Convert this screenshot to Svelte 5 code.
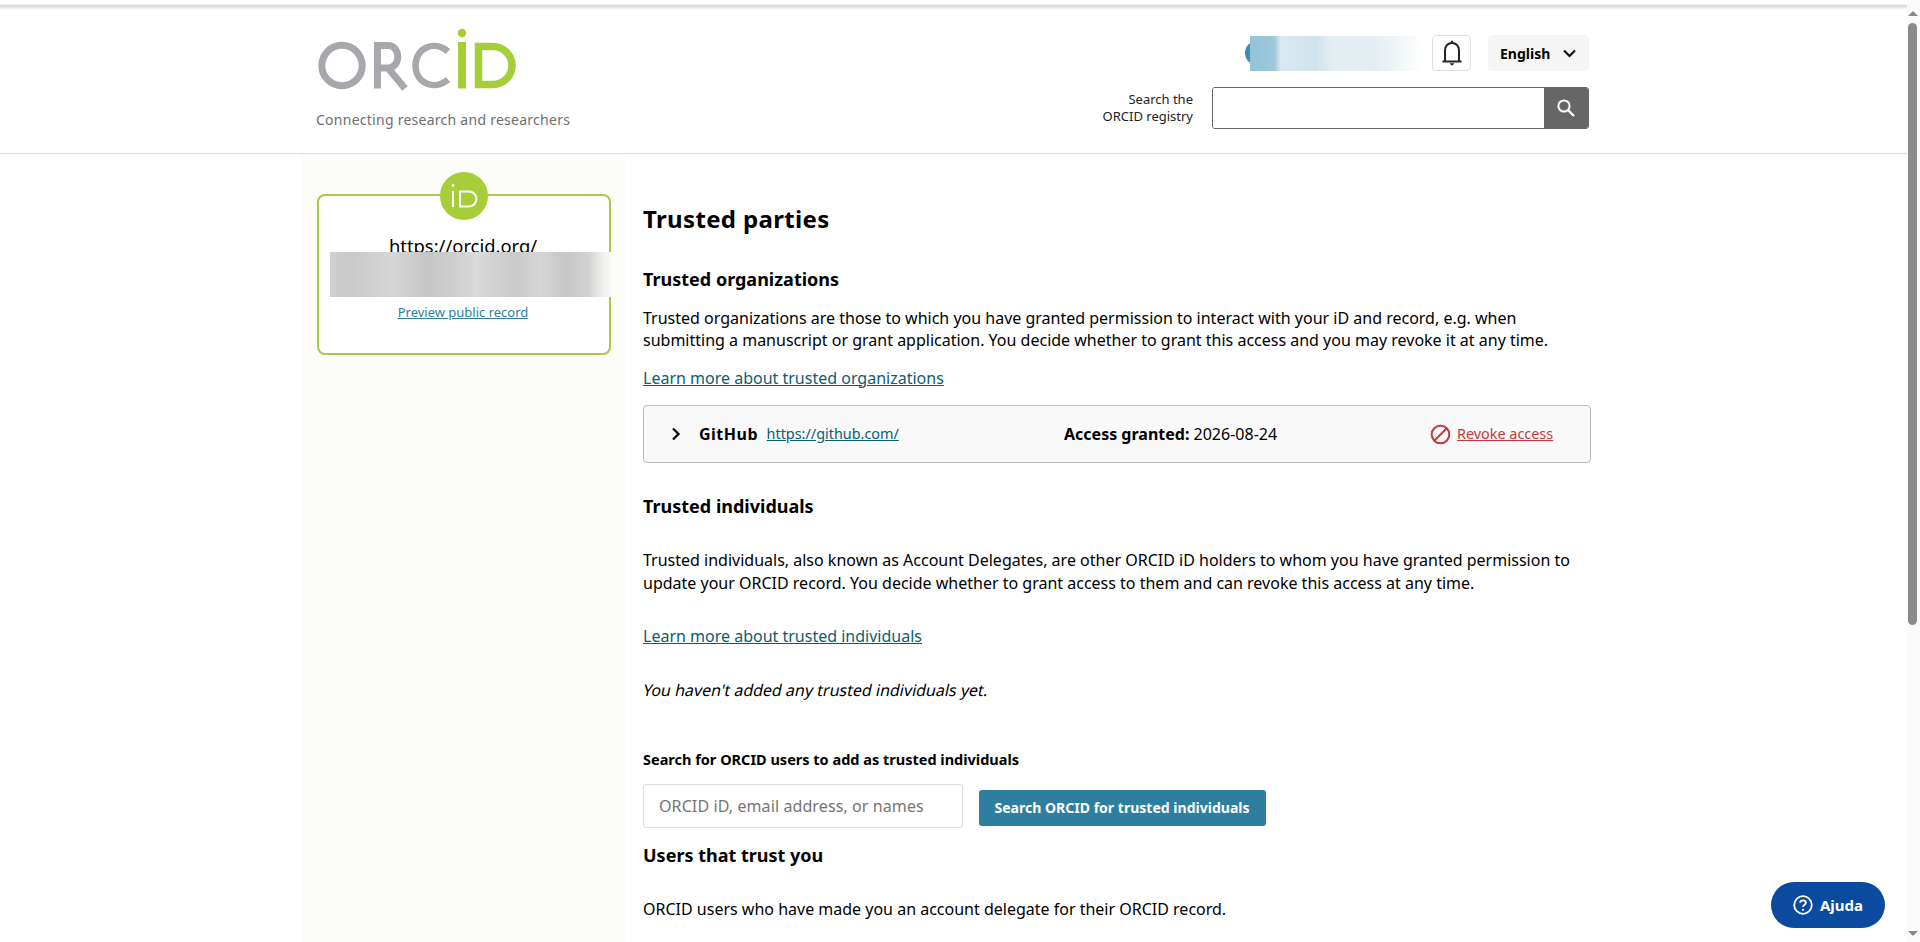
<script>
  const intro = "Trusted organizations are those to which you have granted permission to interact with your iD and record, e.g. when submitting a manuscript or grant application. You decide whether to grant this access and you may revoke it at any time.";
  const indiv = "Trusted individuals, also known as Account Delegates, are other ORCID iD holders to whom you have granted permission to update your ORCID record. You decide whether to grant access to them and can revoke this access at any time.";
</script>

<div class="page">
  <div class="viewport">
    <div class="topline"></div>
    <header>
      <div class="hwrap">
        <div class="brand">
          <svg class="logo" width="204" height="70" viewBox="0 0 204 70" role="img" aria-label="ORCID logo">
            <g fill="none" stroke="#a6a8ab" stroke-width="7">
              <circle cx="26" cy="41.5" r="20.2" />
              <path d="M61.5 64.5V21.5H72C85 21.5 85 44 72 44H61.5M72 44L89 64.5" />
              <path d="M132 27.5C118 15.5 99.5 24 99.5 41.5C99.5 59 118 67.5 132 55.5" stroke-width="6.5" />
            </g>
            <g fill="#a6ce39">
              <rect x="142" y="18" width="8" height="46.5" />
              <circle cx="146" cy="9" r="4.2" />
            </g>
            <path d="M162.5 60.5V22.5H177A19 19 0 0 1 177 60.5Z" fill="none" stroke="#a6ce39" stroke-width="7.5" />
          </svg>
          <div class="tagline">Connecting research and researchers</div>
        </div>
        <div class="tools">
          <div class="row1">
            <div class="user"><span class="dot"></span><span class="smear"></span></div>
            <button class="bell" aria-label="Notifications">
              <svg width="22" height="26" viewBox="0 0 22 26" fill="none" stroke="#222" stroke-width="2">
                <path d="M4 21.5V10.5C4 6 7 3 11 3S18 6 18 10.5V21.5" />
                <path d="M1.5 21.5H20.5" />
                <path d="M11 .8V3.5" />
                <path d="M8.4 23.2H13.6L11 25.8Z" fill="#222" stroke="none" />
              </svg>
            </button>
            <button class="lang">
              <span>English</span>
              <svg width="13" height="9" viewBox="0 0 13 9" fill="none" stroke="#111" stroke-width="2.2"><path d="M1 1.5L6.5 7L12 1.5" /></svg>
            </button>
          </div>
          <div class="row2">
            <div class="slabel">Search the<br />ORCID registry</div>
            <div class="search">
              <input aria-label="Search the ORCID registry" />
              <button aria-label="Search">
                <svg width="20" height="20" viewBox="0 0 20 20" fill="none" stroke="#fff" stroke-width="2"><circle cx="8" cy="8" r="5.6" /><path d="M12 12L18 18" stroke-width="2.4" /></svg>
              </button>
            </div>
          </div>
        </div>
      </div>
    </header>

    <div class="body">
      <aside>
        <div class="card">
          <div class="badge">
            <svg width="32" height="24" viewBox="0 0 32 24" fill="none" stroke="#fff" stroke-width="2">
              <path d="M5 7V23" />
              <circle cx="5" cy="1.5" r="1.4" fill="#fff" stroke="none" />
              <path d="M12 22.5V7.5H21A7.5 7.5 0 0 1 21 22.5Z" />
            </svg>
          </div>
          <div class="url">https://orcid.org/</div>
          <div class="blurred"></div>
          <a class="preview" href="#preview">Preview public record</a>
        </div>
      </aside>

      <main>
        <h1>Trusted parties</h1>
        <h2 class="h-org">Trusted organizations</h2>
        <p class="p-org">{intro}</p>
        <a class="more more-org" href="#org">Learn more about trusted organizations</a>

        <div class="party">
          <svg class="chev" width="10" height="14" viewBox="0 0 10 14" fill="none" stroke="#111" stroke-width="2.4"><path d="M2 1.5L7.5 7L2 12.5" /></svg>
          <strong class="pname">GitHub</strong>
          <a class="plink" href="#gh">https://github.com/</a>
          <span class="granted"><b>Access granted:</b> 2026-08-24</span>
          <span class="revoke">
            <svg width="21" height="21" viewBox="0 0 21 21" fill="none" stroke="#c8363c" stroke-width="2"><circle cx="10.5" cy="10.5" r="8.8" /><path d="M4.5 16.5L16.5 4.5" /></svg>
            <a href="#revoke">Revoke access</a>
          </span>
        </div>

        <h2 class="h-ind">Trusted individuals</h2>
        <p class="p-ind">{indiv}</p>
        <a class="more more-ind" href="#ind">Learn more about trusted individuals</a>
        <p class="none"><span class="slant">You haven't added any trusted individuals yet.</span></p>
        <div class="flabel">Search for ORCID users to add as trusted individuals</div>
        <div class="searchrow">
          <input class="uinput" placeholder="ORCID iD, email address, or names" />
          <button class="primary">Search ORCID for trusted individuals</button>
        </div>
        <h2 class="h-trust">Users that trust you</h2>
        <p class="p-trust">ORCID users who have made you an account delegate for their ORCID record.</p>
      </main>
    </div>
  </div>

  <div class="scrollbar">
    <span class="up"></span>
    <span class="thumb"></span>
    <span class="grow"></span>
    <span class="down"></span>
  </div>

  <button class="help">
    <svg width="20" height="20" viewBox="0 0 20 20" fill="none" stroke="#fff" stroke-width="1.8">
      <circle cx="10" cy="10" r="8.8" />
      <path d="M7.2 7.8C7.2 4.6 12.9 4.6 12.9 7.8C12.9 9.8 10 9.8 10 12" />
      <circle cx="10" cy="14.8" r="1.1" fill="#fff" stroke="none" />
    </svg>
    Ajuda
  </button>
</div>

<style>
  :global(html), :global(body) { margin: 0; height: 100%; overflow: hidden; background: #fff; }
  * { box-sizing: border-box; }
  .page {
    position: relative; display: flex; height: 942px; overflow: hidden;
    font-family: "Noto Sans", sans-serif; font-size: 16px; line-height: 22.4px; color: #000;
  }
  .viewport { flex: 1; min-width: 0; }
  .topline { height: 10px; background: linear-gradient(#fff 0, #fff 4px, #dcdcdc 5px, #e2e2e2 7px, #f8f8f8 9px, #fff 10px); }

  header { height: 144px; border-bottom: 1px solid #dcdcdc; }
  .hwrap { width: 1273px; margin-left: 316px; display: flex; justify-content: space-between; }
  .brand { padding-top: 14px; }
  .logo { display: block; }
  .tagline { margin-top: 16px; font-size: 14px; line-height: 20px; color: #6f6f6f; letter-spacing: .26px; }
  .tools { padding-top: 25px; display: flex; flex-direction: column; align-items: flex-end; }
  .row1 { display: flex; align-items: center; height: 36px; }
  .user { position: relative; width: 172px; height: 35px; margin-right: 10px; }
  .dot { position: absolute; left: -5px; top: 5px; width: 24px; height: 24px; border-radius: 50%; background: #3c8db0; }
  .smear { position: absolute; inset: 0; background: linear-gradient(90deg, #92c3d6 0, #9cc8da 14%, #d9e9ef 18%, #cfe3ec 38%, #e4eff3 48%, #e4eef2 72%, #eef4f6 84%, #fff 100%); }
  .bell { width: 39px; height: 36px; padding: 0; border: 1px solid #ddd; border-radius: 4px; background: #fff; display: flex; align-items: center; justify-content: center; margin-right: 17px; }
  .lang { width: 101px; height: 36px; border: 0; border-radius: 4px; background: #f5f5f5; font: 700 14px "Noto Sans", sans-serif; color: #000; display: flex; align-items: center; gap: 13px; padding: 0 0 0 12px; }
  .lang svg { flex: none; }
  .row2 { display: flex; align-items: center; margin-top: 16px; }
  .slabel { width: 180px; margin-right: 19px; text-align: right; font-size: 13px; line-height: 17px; color: #222; }
  .search { display: flex; width: 377px; height: 42px; border: 1px solid #666; border-radius: 3px; overflow: hidden; }
  .search input { flex: 1; min-width: 0; border: 0; outline: 0; }
  .search button { width: 44px; border: 0; padding: 0; background: #666; display: flex; align-items: center; justify-content: center; }

  .body { display: flex; margin-left: 301px; }
  aside { width: 324px; height: 788px; background: #fcfdf8; padding: 40px 14px 0 16px; }
  .card { position: relative; height: 161px; border: 2px solid #a9c84a; border-radius: 8px; background: #fff; text-align: center; }
  .badge { position: absolute; left: 121px; top: -24px; width: 48px; height: 48px; border-radius: 50%; background: #a6ce39; display: flex; align-items: center; justify-content: center; }
  .url { position: absolute; left: 0; right: 2px; top: 38px; font-size: 18.4px; line-height: 24px; }
  .blurred { position: absolute; left: 11px; top: 56px; width: 281px; height: 45px; background: linear-gradient(90deg, #cfcfcf 0, #c9c9c9 8%, #d6d6d6 22%, #c6c6c6 34%, #cdcdcd 44%, #dadada 52%, #c9c9c9 66%, #d5d5d5 75%, #c6c6c6 84%, #d2d2d2 92%, #f3f5f1 98%, #f7f8f5 100%); }
  .preview { position: absolute; left: 0; right: 2px; top: 108px; font-size: 13px; line-height: 17px; color: #2e7f9f; }

  main { width: 966px; padding-left: 18px; }
  h1, h2, p { margin: 0; }
  h1 { font-size: 24px; line-height: 30px; margin-top: 50px; letter-spacing: .35px; }
  h2 { font-size: 18px; line-height: 24px; }
  a { color: #0a5d72; }
  .h-org { margin-top: 33px; }
  .p-org { margin-top: 16px; }
  .more { display: block; }
  .more-org { margin-top: 15px; }
  .party { display: flex; align-items: center; width: 948px; height: 58px; margin-top: 16px; border: 1px solid #bbb; border-radius: 4px; background: #f9f9f9; padding-left: 27px; }
  .pname { margin-left: 18px; letter-spacing: .5px; }
  .plink { margin-left: 8.5px; font-size: 14.4px; }
  .granted { position: absolute; left: 1064px; }
  .revoke { position: absolute; left: 1430px; display: flex; align-items: center; gap: 6px; font-size: 14.4px; }
  .revoke a { color: #c8363c; }
  .h-ind { margin-top: 31px; }
  .p-ind { margin-top: 31px; }
  .more-ind { margin-top: 31px; }
  .none { margin-top: 32px; }
  .slant { display: inline-block; margin-left: -2px; transform: skewX(-12deg); transform-origin: 0 100%; }
  .flabel { margin-top: 47px; font-size: 14.5px; font-weight: 700; line-height: 20px; }
  .searchrow { display: flex; align-items: center; margin-top: 15px; }
  .uinput { width: 320px; height: 44px; border: 1px solid #ddd; border-radius: 3px; padding: 0 15px; font: 16px "Noto Sans", sans-serif; letter-spacing: .1px; outline: 0; }
  .uinput::placeholder { color: #757575; opacity: 1; }
  .primary { margin: 4px 0 0 16px; width: 287px; height: 36px; border: 0; border-radius: 3px; background: #2e7f9f; color: #fff; font: 700 14px "Noto Sans", sans-serif; letter-spacing: .02px; padding: 0 1px 0 0; }
  .h-trust { margin-top: 15px; }
  .p-trust { margin-top: 31px; }

  .scrollbar { width: 13px; height: 942px; padding-right: 2px; display: flex; flex-direction: column; align-items: center; background: #fafafa; }
  .up { margin-top: 11px; width: 0; height: 0; border: 5px solid transparent; border-top: 0; border-bottom: 5px solid #888; }
  .thumb { width: 9px; height: 602px; margin-top: 7px; border-radius: 5px; background: #8a8a8a; }
  .grow { flex: 1; }
  .down { margin-bottom: 6px; width: 0; height: 0; border: 5px solid transparent; border-bottom: 0; border-top: 5px solid #888; }

  .help { position: absolute; left: 1771px; top: 882px; width: 114px; height: 46px; border: 0; border-radius: 23px; background: #0a4a9f; color: #fff; font: 700 15px "Noto Sans", sans-serif; display: flex; align-items: center; justify-content: center; gap: 7px; padding: 0; }
</style>
